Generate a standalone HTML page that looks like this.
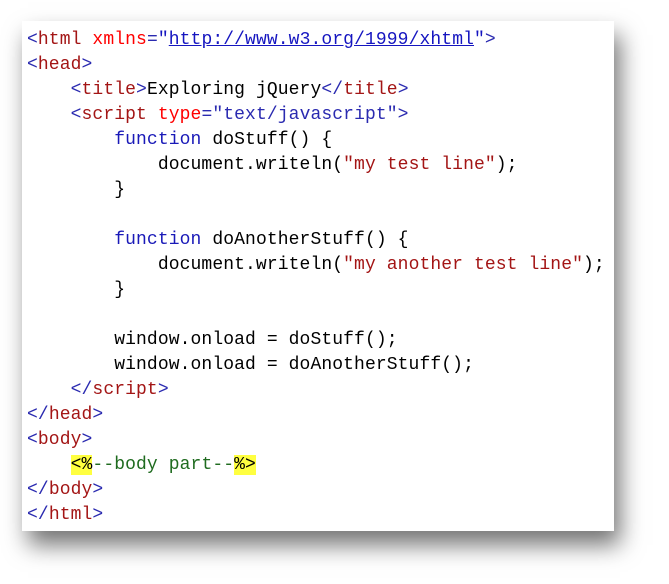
<!DOCTYPE html>
<html><head><style>
body{margin:0;width:669px;height:584px;background:#fff;position:relative;overflow:hidden}
.box{position:absolute;left:22px;top:21px;width:592px;height:510px;background:#fff;box-shadow:6px 14px 22px rgba(0,0,0,.55)}
pre{position:absolute;left:27px;top:28px;margin:0;font-family:"Liberation Mono",monospace;font-size:18px;letter-spacing:0.1px;line-height:25px;color:#000}
.b{color:#2a2ab0}.m{color:#a31515}.r{color:#f00}.v{color:#1515c0}.k{color:#1a1ab8}.s{color:#a31515}.g{color:#1f6b1f}.y{background:#ffff40}
u{color:#1515c0}
</style></head><body>
<div class="box"></div>
<pre><span class="b">&lt;</span><span class="m">html</span> <span class="r">xmlns</span><span class="b">=</span><span class="v">"<u>http://www.w3.org/1999/xhtml</u>"</span><span class="b">&gt;</span>
<span class="b">&lt;</span><span class="m">head</span><span class="b">&gt;</span>
    <span class="b">&lt;</span><span class="m">title</span><span class="b">&gt;</span>Exploring jQuery<span class="b">&lt;/</span><span class="m">title</span><span class="b">&gt;</span>
    <span class="b">&lt;</span><span class="m">script</span> <span class="r">type</span><span class="b">="text/javascript"&gt;</span>
        <span class="k">function</span> doStuff() {
            document.writeln(<span class="s">"my test line"</span>);
        }

        <span class="k">function</span> doAnotherStuff() {
            document.writeln(<span class="s">"my another test line"</span>);
        }

        window.onload = doStuff();
        window.onload = doAnotherStuff();
    <span class="b">&lt;/</span><span class="m">script</span><span class="b">&gt;</span>
<span class="b">&lt;/</span><span class="m">head</span><span class="b">&gt;</span>
<span class="b">&lt;</span><span class="m">body</span><span class="b">&gt;</span>
    <span class="y">&lt;%</span><span class="g">--body part--</span><span class="y">%&gt;</span>
<span class="b">&lt;/</span><span class="m">body</span><span class="b">&gt;</span>
<span class="b">&lt;/</span><span class="m">html</span><span class="b">&gt;</span></pre>
</body></html>
